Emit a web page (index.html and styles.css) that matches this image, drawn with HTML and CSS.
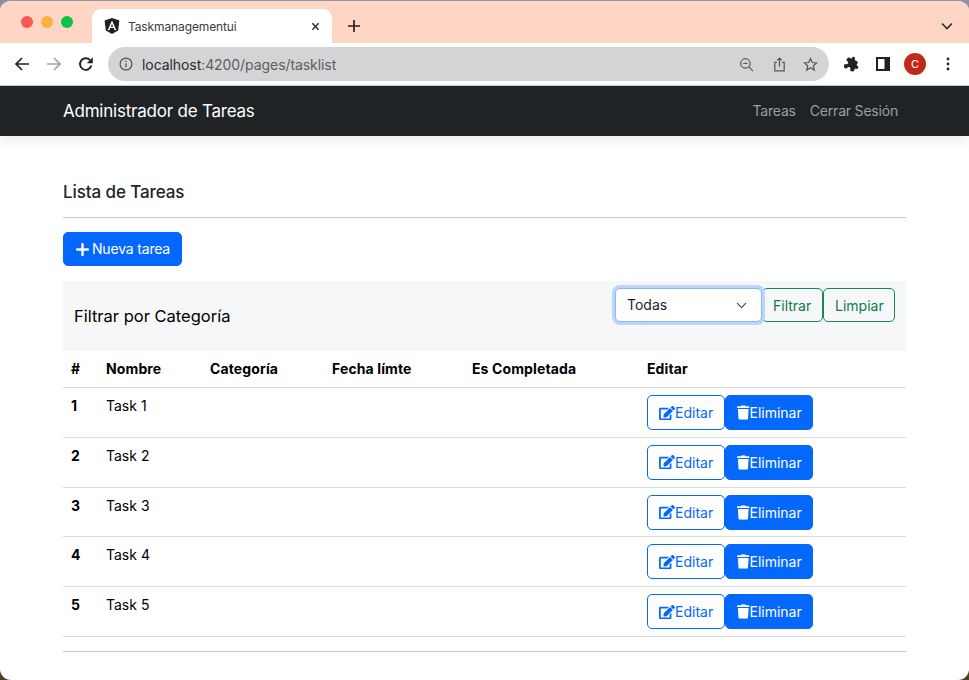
FILE: index.html
```html
<!DOCTYPE html>
<html lang="es">
<head>
<meta charset="utf-8">
<title>Taskmanagementui</title>
<link rel="stylesheet" href="styles.css">
</head>
<body>
<div class="window">
  <div class="tabstrip">
    <div class="lights"><span class="light red"></span><span class="light amber"></span><span class="light green"></span></div>
    <div class="tab">
      <svg class="favicon" viewBox="0 0 16 16"><path d="M8 0 .6 2.6l1.2 9.8L8 16l6.2-3.600 1.200-9.800z" fill="#1c2024"/><path d="M8 2.400 3.600 12.200h1.700l.9-2.200h3.600l.9 2.200h1.700zm-1.200 6.300L8 5.900l1.200 2.800z" fill="#fff"/></svg>
      <span class="tab-title">Taskmanagementui</span>
      <svg class="tab-close" viewBox="0 0 10 10"><path d="M1.500 1.500l7 7M8.500 1.500l-7 7" stroke="#2a2c30" stroke-width="1.600" fill="none"/></svg>
    </div>
    <svg class="new-tab" viewBox="0 0 12 12"><path d="M6 0v12M0 6h12" stroke="#1f2124" stroke-width="1.700"/></svg>
    <svg class="tab-menu" viewBox="0 0 12 8"><path d="M1 1.500l5 5 5-5" stroke="#2a2c30" stroke-width="1.600" fill="none"/></svg>
  </div>
  <div class="toolbar">
    <svg class="tool" viewBox="0 0 16 16"><path d="M15 8H2M8 2 2 8l6 6" stroke="#1f2124" stroke-width="1.700" fill="none"/></svg>
    <svg class="tool" viewBox="0 0 16 16"><path d="M1 8h13M8 2l6 6-6 6" stroke="#a3a5a8" stroke-width="1.700" fill="none"/></svg>
    <svg class="tool" viewBox="0 0 16 16"><path d="M13.400 9.600A5.800 5.800 0 1 1 12 4" stroke="#1f2124" stroke-width="1.900" fill="none"/><path d="M14.800 1.200v6H8.800z" fill="#1f2124"/></svg>
    <div class="omnibox">
      <svg class="omni-info" viewBox="0 0 14 14"><circle cx="7" cy="7" r="5.900" stroke="#55585c" stroke-width="1.300" fill="none"/><path d="M7 6.200v4M7 3.600V5" stroke="#55585c" stroke-width="1.300"/></svg>
      <span class="url"><span class="url-host">localhost</span>:4200/pages/tasklist</span>
      <svg class="omni-icon" viewBox="0 0 16 16"><circle cx="6.800" cy="6.800" r="5" stroke="#55585c" stroke-width="1.300" fill="none"/><path d="M10.500 10.500l4.500 4.500M4.600 6.800H9" stroke="#55585c" stroke-width="1.300"/></svg>
      <svg class="omni-icon share" viewBox="0 0 16 16"><path d="M5.200 5.800H3v9h10v-9h-2.200M8 10.500V1.200M5.500 3.600 8 1.200l2.500 2.400" stroke="#55585c" stroke-width="1.300" fill="none"/></svg>
      <svg class="omni-icon" viewBox="0 0 16 16"><path d="m8 1.600 1.900 4.300 4.700.4-3.600 3.100 1.100 4.600L8 11.500l-4.100 2.500L5 9.400 1.400 6.300l4.700-.4z" stroke="#55585c" stroke-width="1.300" fill="none"/></svg>
    </div>
    <svg class="ext" viewBox="0 0 24 24"><path transform="rotate(25 12 12)" d="M20.500 11H19V7c0-1.100-.9-2-2-2h-4V3.500C13 2.120 11.880 1 10.500 1S8 2.120 8 3.500V5H4c-1.100 0-2 .9-2 2v3.800h1.500c1.490 0 2.700 1.210 2.700 2.700s-1.210 2.700-2.700 2.700H2V20c0 1.100.9 2 2 2h3.800v-1.500c0-1.490 1.210-2.700 2.700-2.700s2.700 1.210 2.700 2.700V22H17c1.100 0 2-.9 2-2v-4h1.500c1.380 0 2.500-1.120 2.500-2.500S21.880 11 20.500 11z" fill="#202226"/></svg>
    <svg class="side" viewBox="0 0 14 14"><path fill-rule="evenodd" d="M0 0h14v14H0zM2 2v10h6.500V2z" fill="#202226"/></svg>
    <span class="avatar">C</span>
    <svg class="dots" viewBox="0 0 4 14"><circle cx="2" cy="2" r="1.400"/><circle cx="2" cy="7" r="1.400"/><circle cx="2" cy="12" r="1.400"/></svg>
  </div>
  <nav class="navbar">
    <a class="brand">Administrador de Tareas</a>
    <div class="nav-links"><a class="nav-link">Tareas</a><a class="nav-link">Cerrar Sesión</a></div>
  </nav>
  <main class="page">
    <h5 class="title">Lista de Tareas</h5>
    <hr class="rule">
    <button class="btn primary new-task">
      <svg class="plus" viewBox="0 0 14 14"><path d="M7 1.200v11.600M1.200 7h11.600" stroke="#fff" stroke-width="2.600" stroke-linecap="round"/></svg>
      <span class="new-label">Nueva tarea</span>
    </button>
    <section class="filter">
      <span class="filter-label">Filtrar por Categoría</span>
      <div class="filter-controls">
        <div class="select">Todas
          <svg class="caret" viewBox="0 0 16 16"><path d="m2 5 6 6 6-6" stroke="#444a50" stroke-width="1.700" fill="none" stroke-linecap="round" stroke-linejoin="round"/></svg>
        </div>
        <button class="btn outline-success filter-btn">Filtrar</button>
        <button class="btn outline-success clear-btn">Limpiar</button>
      </div>
    </section>
    <table class="tasks">
      <thead>
        <tr><th class="c-num">#</th><th class="c-name">Nombre</th><th class="c-cat">Categoría</th><th class="c-date">Fecha límte</th><th class="c-done">Es Completada</th><th>Editar</th></tr>
      </thead>
      <tbody>
        <tr><th>1</th><td>Task 1</td><td></td><td></td><td></td><td class="actions"><div class="action-row"><button class="btn outline-primary"><svg class="icon" viewBox="0 0 576 512"><use href="#edit"/></svg>Editar</button><button class="btn primary del"><svg class="icon trash" viewBox="0 0 448 512"><use href="#trash"/></svg>Eliminar</button></div></td></tr>
        <tr><th>2</th><td>Task 2</td><td></td><td></td><td></td><td class="actions"><div class="action-row"><button class="btn outline-primary"><svg class="icon" viewBox="0 0 576 512"><use href="#edit"/></svg>Editar</button><button class="btn primary del"><svg class="icon trash" viewBox="0 0 448 512"><use href="#trash"/></svg>Eliminar</button></div></td></tr>
        <tr><th>3</th><td>Task 3</td><td></td><td></td><td></td><td class="actions"><div class="action-row"><button class="btn outline-primary"><svg class="icon" viewBox="0 0 576 512"><use href="#edit"/></svg>Editar</button><button class="btn primary del"><svg class="icon trash" viewBox="0 0 448 512"><use href="#trash"/></svg>Eliminar</button></div></td></tr>
        <tr><th>4</th><td>Task 4</td><td></td><td></td><td></td><td class="actions"><div class="action-row"><button class="btn outline-primary"><svg class="icon" viewBox="0 0 576 512"><use href="#edit"/></svg>Editar</button><button class="btn primary del"><svg class="icon trash" viewBox="0 0 448 512"><use href="#trash"/></svg>Eliminar</button></div></td></tr>
        <tr><th>5</th><td>Task 5</td><td></td><td></td><td></td><td class="actions"><div class="action-row"><button class="btn outline-primary"><svg class="icon" viewBox="0 0 576 512"><use href="#edit"/></svg>Editar</button><button class="btn primary del"><svg class="icon trash" viewBox="0 0 448 512"><use href="#trash"/></svg>Eliminar</button></div></td></tr>
      </tbody>
    </table>
    <hr class="rule end">
  </main>
</div>
<svg class="defs" aria-hidden="true">
  <symbol id="edit" viewBox="0 0 576 512"><path fill="currentColor" d="M402.600 83.200l90.200 90.200c3.800 3.800 3.800 10 0 13.800L274.400 405.600l-92.800 10.300c-12.400 1.400-22.900-9.100-21.500-21.500l10.300-92.800L388.800 83.200c3.800-3.800 10-3.800 13.800 0zm162-22.900l-48.800-48.800c-15.200-15.200-39.900-15.200-55.200 0l-35.400 35.400c-3.800 3.800-3.800 10 0 13.800l90.200 90.200c3.800 3.800 10 3.800 13.800 0l35.400-35.400c15.200-15.300 15.200-40 0-55.200zM384 346.200V448H64V128h229.800c3.200 0 6.200-1.300 8.500-3.500l40-40c7.600-7.600 2.200-20.500-8.500-20.500H48C21.500 64 0 85.500 0 112v352c0 26.500 21.500 48 48 48h352c26.500 0 48-21.500 48-48V306.200c0-10.700-12.900-16-20.500-8.500l-40 40c-2.200 2.300-3.500 5.300-3.500 8.500z"/></symbol>
  <symbol id="trash" viewBox="0 0 448 512"><path fill="currentColor" d="M432 32H312l-9.400-18.700A24 24 0 0 0 281.100 0H166.800a23.700 23.700 0 0 0-21.400 13.300L136 32H16A16 16 0 0 0 0 48v32a16 16 0 0 0 16 16h416a16 16 0 0 0 16-16V48a16 16 0 0 0-16-16zM53.200 467a48 48 0 0 0 47.900 45h245.800a48 48 0 0 0 47.900-45L416 128H32z"/></symbol>
</svg>
</body>
</html>
```
FILE: styles.css
```css
* { box-sizing: border-box; }
html, body { margin: 0; height: 100%; }
html { background: linear-gradient(#8b90a6 0, #8b90a6 50%, #4a3f1e 100%); }
body { overflow: hidden; font-family: Inter, "Liberation Sans", sans-serif; color: #000; }
.window { height: 680px; background: #fff; border-radius: 11px; overflow: hidden; display: flex; flex-direction: column; border-top: 1px solid #8f94ab; }
.defs { position: absolute; width: 0; height: 0; }

.tabstrip { height: 42px; background: #ffd5c4; display: flex; align-items: flex-end; position: relative; flex: none; }
.lights { display: flex; gap: 8px; padding-left: 21px; width: 92px; height: 100%; align-items: center; margin-top: -1px; }
.light { width: 12px; height: 12px; border-radius: 50%; }
.red { background: #fc5753; }
.amber { background: #fdb13c; }
.green { background: #08c44a; }
.tab { width: 240px; height: 34px; background: #fff; border-radius: 9px 9px 0 0; display: flex; align-items: center; padding: 0 12px; }
.favicon { width: 16px; height: 16px; margin-right: 8px; flex: none; }
.tab-title { font-size: 12px; letter-spacing: -.12px; color: #3a3c40; flex: 1; white-space: nowrap; }
.tab-close { width: 9px; height: 9px; }
.new-tab { width: 12px; height: 12px; margin: 0 0 11px 16px; }
.tab-menu { width: 12px; height: 8px; position: absolute; right: 16px; top: 21px; }

.toolbar { height: 43px; background: #fff; display: flex; align-items: center; flex: none; padding-left: 14px; border-bottom: 1px solid #c9ccd1; }
.tool { width: 16px; height: 16px; margin-right: 16px; flex: none; }
.tool:nth-child(3) { margin-right: 14px; }
.omnibox { width: 721px; height: 34px; border-radius: 17px; background: #d4d4d6; display: flex; align-items: center; padding: 0 11px; flex: none; }
.omni-info { width: 14px; height: 14px; margin-right: 9px; flex: none; }
.url { font-size: 14px; letter-spacing: -.07px; color: #5b5e62; flex: 1; white-space: nowrap; }
.url-host { color: #27292c; }
.omni-icon { width: 15px; height: 15px; margin-left: 16px; flex: none; }
.omni-icon.share { margin-left: 18px; }
.ext { width: 16px; height: 16px; margin-left: 15px; flex: none; }
.side { width: 14px; height: 14px; margin-left: 16px; flex: none; }
.avatar { width: 22px; height: 22px; border-radius: 50%; background: #c0291a; color: #fff; font-size: 11px; display: flex; align-items: center; justify-content: center; margin-left: 14px; flex: none; }
.dots { width: 4px; height: 14px; margin-left: 20px; fill: #202226; flex: none; }

.navbar { height: 50px; background: #1f2326; display: flex; align-items: center; justify-content: space-between; padding: 0 63px; flex: none; box-shadow: 0 4px 14px rgba(0,0,0,.09); position: relative; }
.brand { font-size: 17px; letter-spacing: -.22px; color: #fff; }
.nav-links { display: flex; gap: 14px; margin: -1px 8px 0 0; }
.nav-link { font-size: 14px; letter-spacing: -.2px; color: #9c9ea0; }

.page { flex: 1; padding: 44px 63px 0; }
.title { margin: 0; font-size: 17px; letter-spacing: -.1px; font-weight: 500; line-height: 24px; color: #212529; }
.rule { margin: 13px 0 14px; border: 0; border-top: 1px solid #c8c9ca; }
.rule.end { margin: 14px 0 0; }
.btn { font: 400 14px/21px Inter, "Liberation Sans", sans-serif; padding: 6px 11px; height: 35px; border-radius: 5px; border: 1px solid transparent; background: none; display: inline-flex; align-items: center; white-space: nowrap; }
.primary { background: #0468fc; color: #fff; border-color: #0468fc; }
.outline-primary { color: #0468fc; border-color: #0468fc; background: #fff; width: 78px; }
.del { width: 88px; }
.outline-success { color: #0f7a4e; border-color: #198754; height: 34px; }
.filter-btn { width: 61px; padding-left: 10px; }
.clear-btn { width: 72px; }
.new-task { width: 119px; height: 34px; display: flex; gap: 3px; padding-left: 12px; }
.new-label { letter-spacing: -.18px; margin-top: -2px; }
.plus { width: 13px; height: 13px; flex: none; }
.filter { height: 70px; margin-top: 15px; background: #f6f7f9; display: flex; justify-content: space-between; padding: 7px 11px 0; }
.filter-label { font-size: 16.500px; line-height: 24px; margin-top: 16px; }
.filter-controls { display: flex; align-items: flex-start; }
.select { width: 147px; height: 34px; background: #fff; border: 1px solid #86b7fe; border-radius: 5px; box-shadow: 0 0 0 3px #bcd5fb; font-size: 14px; line-height: 32px; padding-left: 11px; color: #212529; position: relative; }
.caret { width: 11px; height: 11px; position: absolute; right: 14px; top: 11px; }

.tasks { width: 100%; border-collapse: collapse; table-layout: fixed; font-size: 14px; }
.tasks th, .tasks td { padding: 0 8px; text-align: left; vertical-align: top; border-bottom: 1px solid #d8dde2; line-height: 21px; }
.tasks thead th { height: 36.600px; padding-top: 7px; font-weight: 700; letter-spacing: .12px; }
.tasks tbody th, .tasks tbody td { height: 49.800px; padding-top: 7px; font-weight: 400; }
.tasks tbody th { font-weight: 700; }
.c-num { width: 35px; }
.c-name { width: 104px; }
.c-cat { width: 122px; }
.c-date { width: 140px; }
.c-done { width: 175px; }
.action-row { display: flex; }
.icon { width: 16px; height: 14.200px; flex: none; }
.icon.trash { width: 12.500px; height: 15px; }
```
